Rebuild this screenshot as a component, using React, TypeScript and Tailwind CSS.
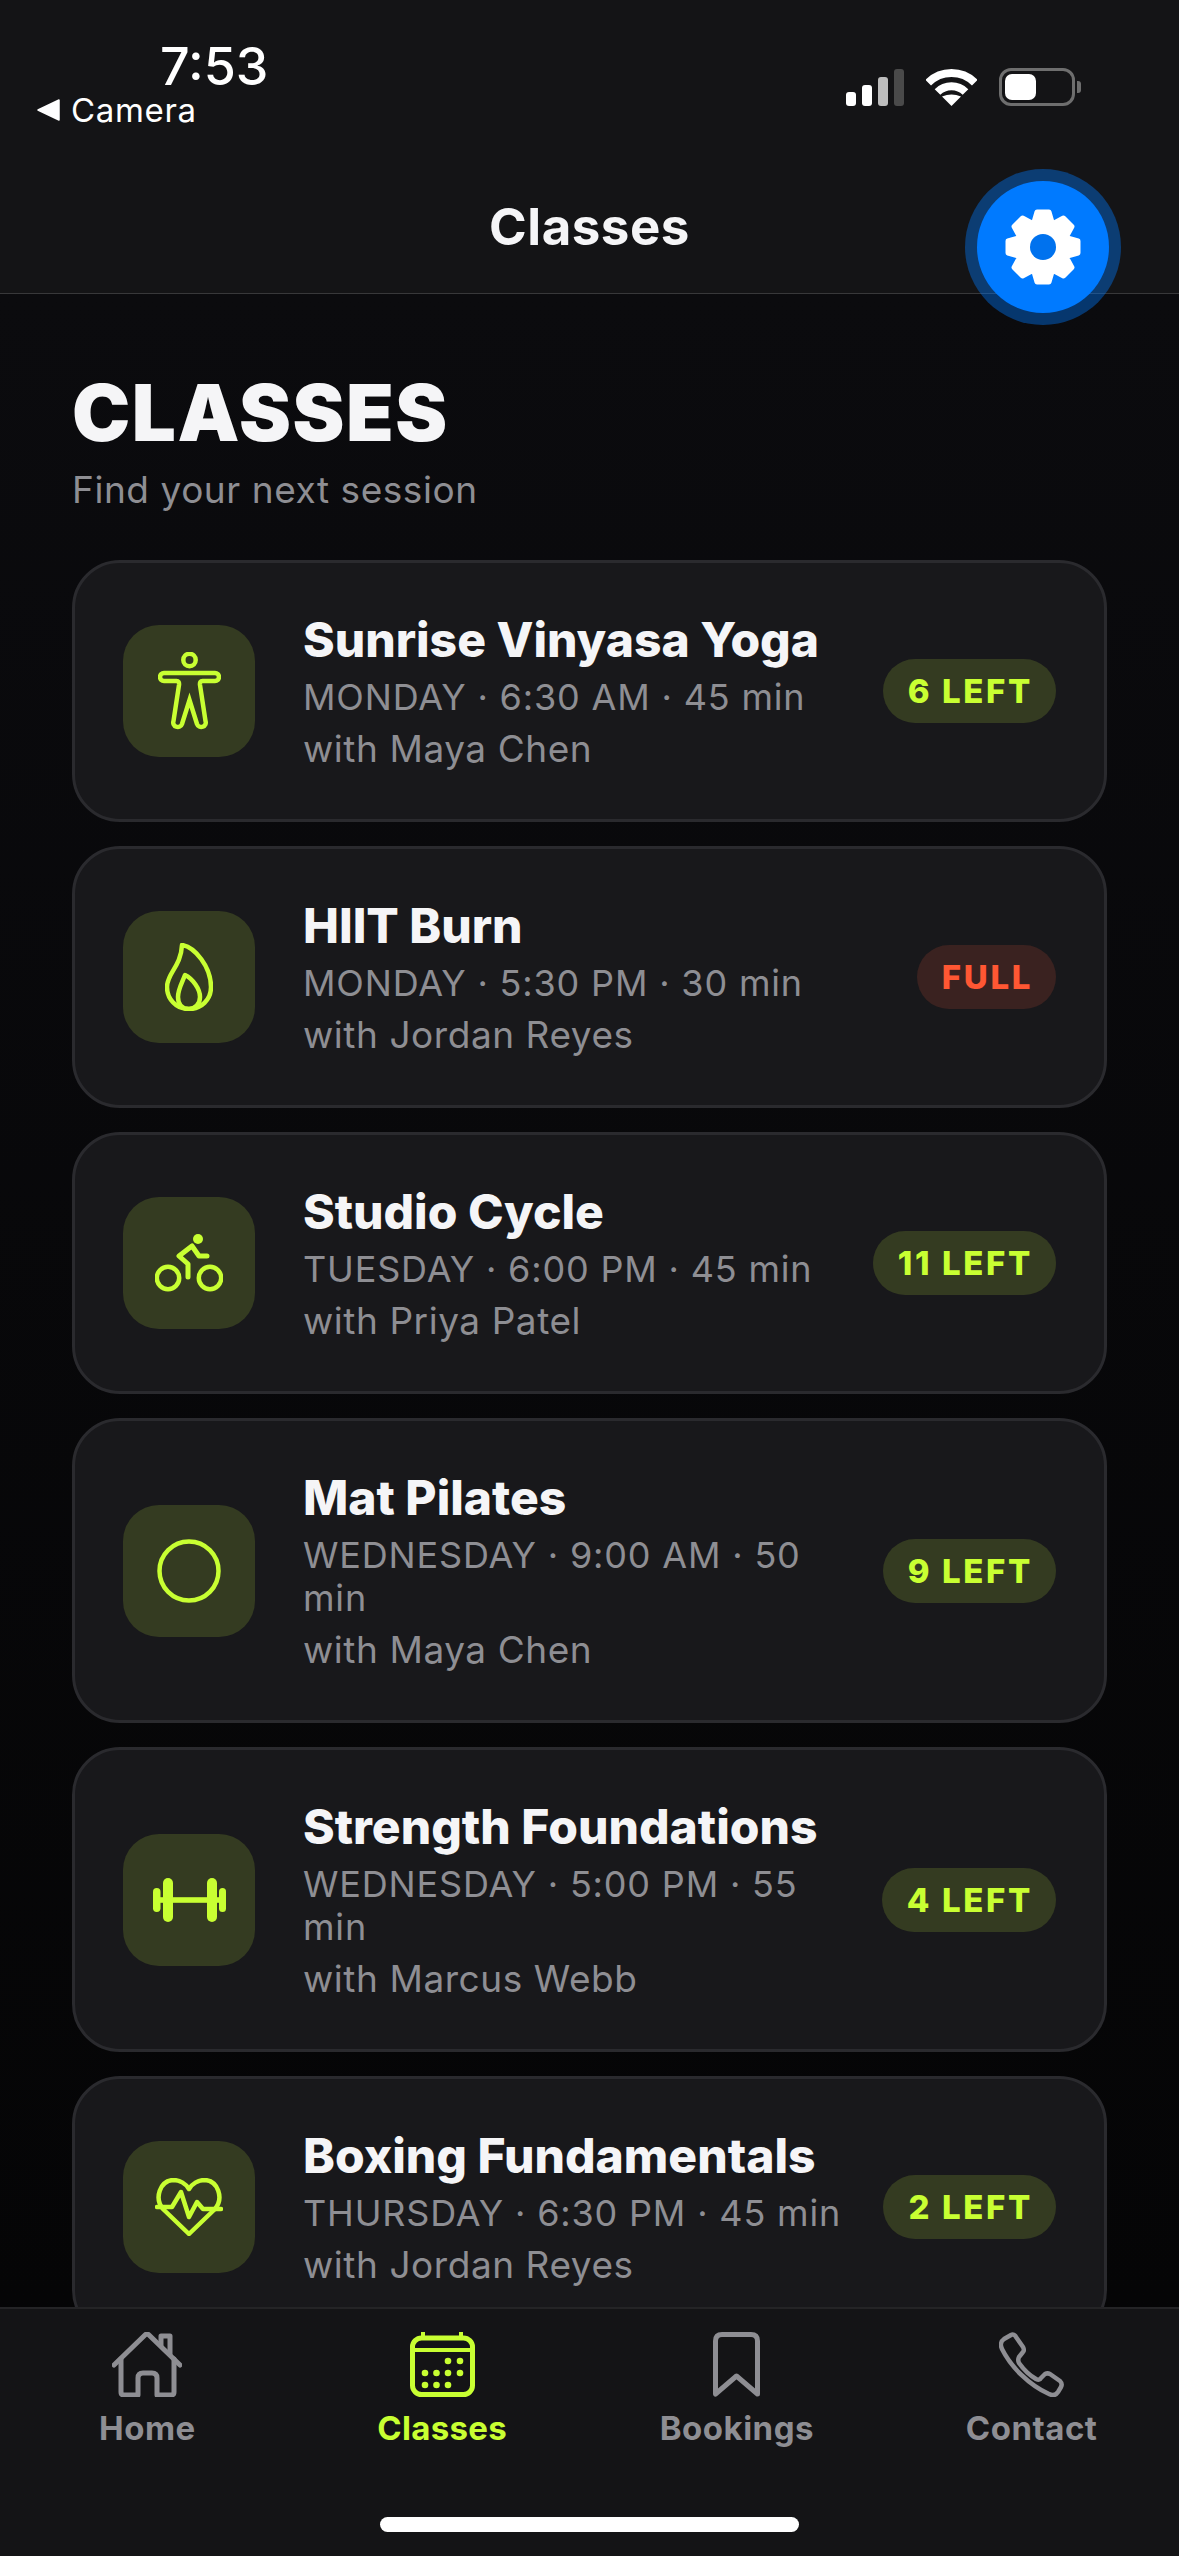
import React from 'react';

const LIME = '#c8ff32';
const GREY = '#8e8e93';

// 8 tooth gear, the outline is worked out once at load
const gearPath = (() => {
    const pts: string[] = [];
    for (let i = 0; i < 8; i++) {
        const a = (i * Math.PI) / 4 - Math.PI / 2;
        const p = (r: number, off: number) =>
            `${(40 + r * Math.cos(a + off)).toFixed(2)} ${(40 + r * Math.sin(a + off)).toFixed(2)}`;
        pts.push(p(26, -0.36), p(35.5, -0.17), p(35.5, 0.17), p(26, 0.36));
    }
    return `M${pts.join(' L')} Z`;
})();

const GearIcon = () => (
    <svg width="80" height="80" viewBox="0 0 80 80">
        <path d={gearPath} fill="white" stroke="white" strokeWidth="5" strokeLinejoin="round" />
        <circle cx="40" cy="40" r="13" fill="#0072ee" />
    </svg>
);

const PersonIcon = () => (
    <svg width="63" height="78" viewBox="0 0 63 78" fill="none" stroke={LIME} strokeWidth="4.5">
        <circle cx="31.5" cy="8" r="6.2" />
        <path d="M6 21 H57 A4 4 0 0 1 57 29 H44.5 Q41.5 29 42 33 L47.5 69 A4.5 4.5 0 0 1 39 72 L31.5 48 L24 72 A4.5 4.5 0 0 1 15.5 69 L21 33 Q21.5 29 18.5 29 H6 A4 4 0 0 1 6 21 Z" />
    </svg>
);

const FlameIcon = () => (
    <svg width="48" height="68" viewBox="0 0 48 68" fill="none" stroke={LIME} strokeWidth="4.5" strokeLinejoin="round">
        <path d="M17 2 C30 4 46 24 46 44 C46 57 36 66 24 66 C11 66 2 56 2 44 C2 30 16 24 17 2 Z" />
        <path d="M20 32 C28 36 35 46 35 54 C35 61 30 66 24 66 C17 66 13 61 13 54 C13 46 17 40 20 32 Z" />
    </svg>
);

const BikeIcon = () => (
    <svg width="68" height="58" viewBox="0 0 68 58" fill="none" stroke={LIME} strokeWidth="4.5">
        <circle cx="13" cy="44" r="11.2" />
        <circle cx="55" cy="44" r="11.2" />
        <circle cx="43" cy="5" r="5" fill={LIME} stroke="none" />
        <path d="M52 22 H44 L37 12 L24 22 L33 30 V43" strokeWidth="5" strokeLinecap="round" strokeLinejoin="round" />
    </svg>
);

const CircleIcon = () => (
    <svg width="64" height="64" viewBox="0 0 64 64" fill="none" stroke={LIME} strokeWidth="4.5">
        <circle cx="32" cy="32" r="29.5" />
    </svg>
);

const DumbbellIcon = () => (
    <svg width="73" height="44" viewBox="0 0 73 44" fill={LIME}>
        <rect x="0" y="10" width="7.5" height="24" rx="3.7" />
        <rect x="10" y="0" width="10" height="44" rx="5" />
        <rect x="7" y="19.2" width="59" height="5.6" />
        <rect x="54" y="0" width="10" height="44" rx="5" />
        <rect x="66" y="10" width="7" height="24" rx="3.5" />
    </svg>
);

const HeartIcon = () => (
    <svg width="68" height="58" viewBox="0 0 68 58" fill="none" stroke={LIME} strokeWidth="4.5" strokeLinecap="round" strokeLinejoin="round">
        <path d="M34 56 L8 31 C-1 20 5 3 18 2 C25 2 31 6 34 11 C37 6 43 2 50 2 C63 3 69 20 60 31 Z" />
        <path d="M2 29 H17 L26 14 L34 39 L42 24 L48 31 H66" />
    </svg>
);

const HomeIcon = () => (
    <svg width="70" height="65" viewBox="0 0 70 65" fill="none" stroke={GREY} strokeWidth="5" strokeLinecap="round" strokeLinejoin="round">
        <path d="M2 33 L33 3 Q35 1 37 3 L68 33" />
        <path d="M9 27 V60 Q9 63 12 63 H26 V46 Q26 41 31 41 H40 Q45 41 45 46 V63 H59 Q62 63 62 60 V27" />
        <path d="M49 13 V4 H58 V22" />
    </svg>
);

const CalendarIcon = () => (
    <svg width="65" height="65" viewBox="0 0 65 65" fill="none" stroke={LIME} strokeWidth="5">
        <rect x="2.5" y="6" width="60" height="56.5" rx="9" />
        <path d="M2.5 18 H62.5 M13 0 V6 M51 0 V6" strokeWidth="4" />
        <g fill={LIME} stroke="none">
            <circle cx="38" cy="29" r="3.3" />
            <circle cx="50" cy="29" r="3.3" />
            <circle cx="15" cy="41" r="3.3" />
            <circle cx="26.5" cy="41" r="3.3" />
            <circle cx="38" cy="41" r="3.3" />
            <circle cx="50" cy="41" r="3.3" />
            <circle cx="15" cy="53" r="3.3" />
            <circle cx="26.5" cy="53" r="3.3" />
            <circle cx="38" cy="53" r="3.3" />
        </g>
    </svg>
);

const BookmarkIcon = () => (
    <svg width="47" height="65" viewBox="0 0 47 65" fill="none" stroke={GREY} strokeWidth="5" strokeLinejoin="round">
        <path d="M2.5 62 V9 Q2.5 2.5 9 2.5 H38 Q44.5 2.5 44.5 9 V62 L23.5 44 Z" />
    </svg>
);

const PhoneIcon = () => (
    <svg width="65" height="65" viewBox="0 0 65 65" fill="none" stroke={GREY} strokeWidth="4.5" strokeLinejoin="round">
        <path d="M12 3 C14 2 16 3 17 5 L24 15 C25 17 25 19 24 20 L20 25 C19 27 19 29 20 31 C25 38 30 43 37 47 C39 48 41 48 42 46 L46 42 C48 41 49 41 51 42 L61 49 C63 51 63 53 62 55 L59 60 C57 63 54 64 50 62 C30 53 12 35 3 17 C1 13 2 9 5 7 Z" />
    </svg>
);

const StatusIcons = () => (
    <div className="mt-[32px] flex items-end gap-[22px]">
        <div className="flex items-end gap-[6px]">
            <div className="h-[14px] w-[10px] rounded-[3px] bg-white" />
            <div className="h-[21px] w-[10px] rounded-[3px] bg-white" />
            <div className="h-[29px] w-[10px] rounded-[3px] bg-[#bdbdbd]" />
            <div className="h-[37px] w-[10px] rounded-[3px] bg-[#4a4a4a]" />
        </div>
        <svg width="51" height="37" viewBox="0 0 51 37" fill="none" stroke="white" strokeWidth="8">
            <path d="M2.2 13.7 A33 33 0 0 1 48.8 13.7" />
            <path d="M11.5 23 A20 20 0 0 1 39.5 23" />
            <path d="M25.5 37 L16 27.5 Q25.5 23.5 35 27.5 Z" fill="white" stroke="none" />
        </svg>
        <div className="flex items-center gap-[2px]">
            <div className="flex h-[38px] w-[76px] items-center rounded-[12px] border-[3px] border-[#6e6e6e] p-[3px]">
                <div className="h-full w-[31px] rounded-[7px] bg-white" />
            </div>
            <div className="h-[12px] w-[4px] rounded-r-[3px] bg-[#6e6e6e]" />
        </div>
    </div>
);

interface ClassItem {
    name: string;
    meta: string;
    teacher: string;
    badge: string;
    icon: React.ReactNode;
}

const classes: ClassItem[] = [
    { name: 'Sunrise Vinyasa Yoga', meta: 'MONDAY · 6:30 AM · 45 min', teacher: 'with Maya Chen', badge: '6 LEFT', icon: <PersonIcon /> },
    { name: 'HIIT Burn', meta: 'MONDAY · 5:30 PM · 30 min', teacher: 'with Jordan Reyes', badge: 'FULL', icon: <FlameIcon /> },
    { name: 'Studio Cycle', meta: 'TUESDAY · 6:00 PM · 45 min', teacher: 'with Priya Patel', badge: '11 LEFT', icon: <BikeIcon /> },
    { name: 'Mat Pilates', meta: 'WEDNESDAY · 9:00 AM · 50 min', teacher: 'with Maya Chen', badge: '9 LEFT', icon: <CircleIcon /> },
    { name: 'Strength Foundations', meta: 'WEDNESDAY · 5:00 PM · 55 min', teacher: 'with Marcus Webb', badge: '4 LEFT', icon: <DumbbellIcon /> },
    { name: 'Boxing Fundamentals', meta: 'THURSDAY · 6:30 PM · 45 min', teacher: 'with Jordan Reyes', badge: '2 LEFT', icon: <HeartIcon /> },
];

const ClassCard: React.FC<{ item: ClassItem }> = ({ item }) => {
    const full = item.badge === 'FULL';
    return (
        <div className="flex shrink-0 items-center rounded-[48px] border-[3px] border-[#2a2a2e] bg-[#18181b] p-[48px]">
            <div className="mr-[48px] flex h-[132px] w-[132px] shrink-0 items-center justify-center rounded-[36px] bg-[#343b21]">
                {item.icon}
            </div>
            <div className="min-w-0 flex-1">
                <div className="text-[48px] leading-[58px] font-extrabold text-[#f5f5f7]">{item.name}</div>
                <div className="mt-[7px] text-[36px] leading-[43px] tracking-[0.023em] text-[#8e8e93]">{item.meta}</div>
                <div className="mt-[8px] text-[37px] leading-[44px] tracking-[0.015em] text-[#8e8e93]">{item.teacher}</div>
            </div>
            <div
                className={
                    full
                        ? 'ml-[32px] shrink-0 rounded-full bg-[#3a2220] py-[12px] pr-[23px] pl-[25px] text-[33px] leading-[40px] font-extrabold tracking-[0.08em] text-[#ff5733]'
                        : 'ml-[32px] shrink-0 rounded-full bg-[#343b21] py-[12px] pr-[23px] pl-[25px] text-[33px] leading-[40px] font-extrabold tracking-[0.08em] text-[#c8ff32]'
                }
            >
                {item.badge}
            </div>
        </div>
    );
};

const Tab: React.FC<{ label: string; active?: boolean; children: React.ReactNode }> = ({ label, active, children }) => (
    <div className="flex flex-col items-center">
        <div className="flex h-[65px] items-center justify-center">{children}</div>
        <div
            className={
                active
                    ? 'mt-[11px] text-[33px] leading-[40px] font-bold tracking-[0.01em] text-[#c8ff32]'
                    : 'mt-[11px] text-[33px] leading-[40px] font-bold tracking-[0.015em] text-[#8e8e93]'
            }
        >
            {label}
        </div>
    </div>
);

export default function App() {
    return (
        <div className="relative flex h-[2556px] w-[1179px] flex-col overflow-hidden bg-[#0a0a0c] font-['Inter','Liberation_Sans',sans-serif]">
            {/* Status bar and nav header */}
            <header className="shrink-0 border-b border-[#38383a] bg-[#141416] pb-[36px]">
                <div className="flex items-start justify-between pr-[98px] pl-[37px]">
                    <div className="pt-[39px]">
                        <div className="ml-[123px] text-[52px] leading-[56px] font-medium text-white">7:53</div>
                        <div className="mt-[-5px] flex items-center gap-[10px] text-[33px] leading-[40px] tracking-[0.02em] text-white">
                            <svg width="24" height="22" viewBox="0 0 24 22" fill="white">
                                <path d="M1 11 L22 1 V21 Z" stroke="white" strokeWidth="1.5" strokeLinejoin="round" />
                            </svg>
                            Camera
                        </div>
                    </div>
                    <div className="pt-[36px]">
                        <StatusIcons />
                    </div>
                </div>
                <div className="mt-[67px] text-center text-[51px] leading-[60px] font-bold tracking-[0.01em] text-[#f5f5f7]">Classes</div>
            </header>

            {/* Floating settings button */}
            <div className="absolute top-[181px] left-[977px] flex h-[132px] w-[132px] items-center justify-center rounded-full bg-[#007aff] shadow-[0_0_0_12px_rgba(0,122,255,0.4)]">
                <GearIcon />
            </div>

            <main className="min-h-0 flex-1 overflow-hidden bg-gradient-to-b from-[#0b0b0e] to-[#050506] px-[72px] pt-[76px]">
                <h1 className="text-[78px] leading-[86px] font-black tracking-[0.02em] text-[#f5f5f7]">CLASSES</h1>
                <p className="mt-[10px] mb-[46px] text-[37px] leading-[48px] tracking-[0.015em] text-[#8e8e93]">Find your next session</p>
                <div className="flex flex-col gap-[24px]">
                    {classes.map((item) => (
                        <ClassCard key={item.name} item={item} />
                    ))}
                </div>
            </main>

            {/* Tab bar */}
            <nav className="flex h-[249px] shrink-0 flex-col border-t-[2px] border-[#242426] bg-[#141416]">
                <div className="grid grid-cols-4 pt-[23px]">
                    <Tab label="Home"><HomeIcon /></Tab>
                    <Tab label="Classes" active><CalendarIcon /></Tab>
                    <Tab label="Bookings"><BookmarkIcon /></Tab>
                    <Tab label="Contact"><PhoneIcon /></Tab>
                </div>
                <div className="mt-auto mb-[24px] h-[15px] w-[419px] self-center rounded-full bg-white" />
            </nav>
        </div>
    );
}
